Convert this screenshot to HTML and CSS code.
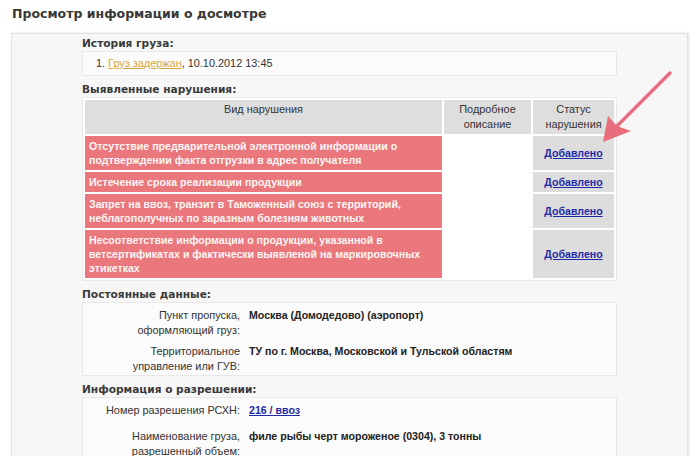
FILE: index.html
```html
<!DOCTYPE html>
<html lang="ru">
<head>
<meta charset="utf-8">
<title>Просмотр информации о досмотре</title>
<link rel="stylesheet" href="styles.css">
</head>
<body>
<h1 class="title">Просмотр информации о досмотре</h1>
<div class="panel">
  <div class="content">
    <h2 class="sec sec-first">История груза:</h2>
    <div class="box history">1. <a class="link-gold" href="#">Груз задержан</a>, 10.10.2012 13:45</div>

    <h2 class="sec">Выявленные нарушения:</h2>
    <table class="viol">
      <colgroup><col class="c1"><col class="c2"><col class="c3"></colgroup>
      <thead>
        <tr><th>Вид нарушения</th><th>Подробное<br>описание</th><th>Статус<br>нарушения</th></tr>
      </thead>
      <tbody>
        <tr><td class="red">Отсутствие предварительной электронной информации о подтверждении факта отгрузки в адрес получателя</td><td class="desc"></td><td class="status"><a href="#">Добавлено</a></td></tr>
        <tr><td class="red">Истечение срока реализации продукции</td><td class="desc"></td><td class="status"><a href="#">Добавлено</a></td></tr>
        <tr><td class="red">Запрет на ввоз, транзит в Таможенный союз с территорий, неблагополучных по заразным болезням животных</td><td class="desc"></td><td class="status"><a href="#">Добавлено</a></td></tr>
        <tr><td class="red">Несоответствие информации о продукции, указанной в ветсертификатах и фактически выявленой на маркировочных этикетках</td><td class="desc"></td><td class="status"><a href="#">Добавлено</a></td></tr>
      </tbody>
    </table>

    <h2 class="sec">Постоянные данные:</h2>
    <div class="box kv">
      <div class="row"><div class="lbl">Пункт пропуска,<br>оформляющий груз:</div><div class="val">Москва (Домодедово) (аэропорт)</div></div>
      <div class="row"><div class="lbl">Территориальное<br>управление или ГУВ:</div><div class="val">ТУ по г. Москва, Московской и Тульской областям</div></div>
    </div>

    <h2 class="sec">Информация о разрешении:</h2>
    <div class="box kv">
      <div class="row row-single"><div class="lbl">Номер разрешения РСХН:</div><div class="val"><a class="link-blue" href="#">216 / ввоз</a></div></div>
      <div class="row"><div class="lbl">Наименование груза,<br>разрешенный объем:</div><div class="val">филе рыбы черт мороженое (0304), 3 тонны</div></div>
    </div>
  </div>
</div>
<svg class="arrow" width="700" height="456" viewBox="0 0 700 456" aria-hidden="true">
  <line x1="670" y1="73" x2="614" y2="129" stroke="#ea6d7d" stroke-width="3.4" stroke-linecap="round"/>
  <polygon points="603,142 608,116 617,126 631,131" fill="#ea6d7d"/>
</svg>
</body>
</html>
```
FILE: styles.css
```css
html, body {
  margin: 0;
  padding: 0;
  background: #ffffff;
}
body {
  position: relative;
  width: 700px;
  height: 456px;
  overflow: hidden;
  font-family: "Liberation Sans", Arial, sans-serif;
  font-size: 10.9px;
  color: #333333;
}
.title {
  margin: 0;
  height: 33px;
  box-sizing: border-box;
  padding: 6px 0 0 12px;
  font-family: "DejaVu Sans", Verdana, sans-serif;
  font-weight: bold;
  font-size: 12.5px;
  line-height: 16px;
  color: #383838;
}
.panel {
  margin: 0 12px 0 11px;
  height: 440px;
  box-sizing: border-box;
  background: #f7f7f7;
  border: 1px solid #e2e2e2;
  box-shadow: 1px 0 2px rgba(0, 0, 0, 0.12);
  padding: 0 70px;
}
.content {
  width: 535px;
}
.sec {
  margin: 6px 0 1px;
  height: 14px;
  font-family: "DejaVu Sans", Verdana, sans-serif;
  font-weight: bold;
  font-size: 10.6px;
  line-height: 14px;
  color: #3a3a3a;
}
.sec-first {
  margin-top: 2px;
}
.box {
  background: #fbfbfb;
  border: 1px solid #e8e8e8;
}
.history {
  padding: 4px 0 4px 13px;
  line-height: 15px;
  color: #333;
}
.link-gold {
  color: #d9a740;
  text-decoration: underline;
}
.viol {
  width: 535px;
  border-collapse: separate;
  border-spacing: 2px;
  background: #ffffff;
  border: 1px solid #e8e8e8;
  table-layout: fixed;
  margin-top: 0;
}
.c1 { width: 357px; }
.c2 { width: 87px; }
.c3 { width: 81px; }
.viol th {
  background: #dedede;
  font-weight: normal;
  color: #333;
  line-height: 15px;
  padding: 2px 2px;
  height: 30px;
  text-align: center;
  vertical-align: top;
}
.viol td {
  line-height: 14px;
  padding: 3px 4px 3px;
  vertical-align: middle;
}
.viol td.red {
  background: #ea777b;
  color: #fff6f6;
  font-weight: bold;
  font-size: 10.6px;
}
.viol td.desc {
  background: #ffffff;
}
.viol td.status {
  background: #dddddd;
  text-align: center;
}
.status a, .link-blue {
  color: #1f2aa6;
  font-weight: bold;
  font-size: 10.6px;
  text-decoration: underline;
}
.kv .row {
  display: grid;
  grid-template-columns: 157px 1fr;
  column-gap: 9px;
  padding: 5px 0 1px;
  line-height: 15px;
}
.kv .row-single {
  padding-bottom: 6px;
}
.lbl {
  text-align: right;
  color: #333;
}
.val {
  font-weight: bold;
  font-size: 10.6px;
  color: #222;
}
.arrow {
  position: absolute;
  left: 0;
  top: 0;
  pointer-events: none;
}
```
